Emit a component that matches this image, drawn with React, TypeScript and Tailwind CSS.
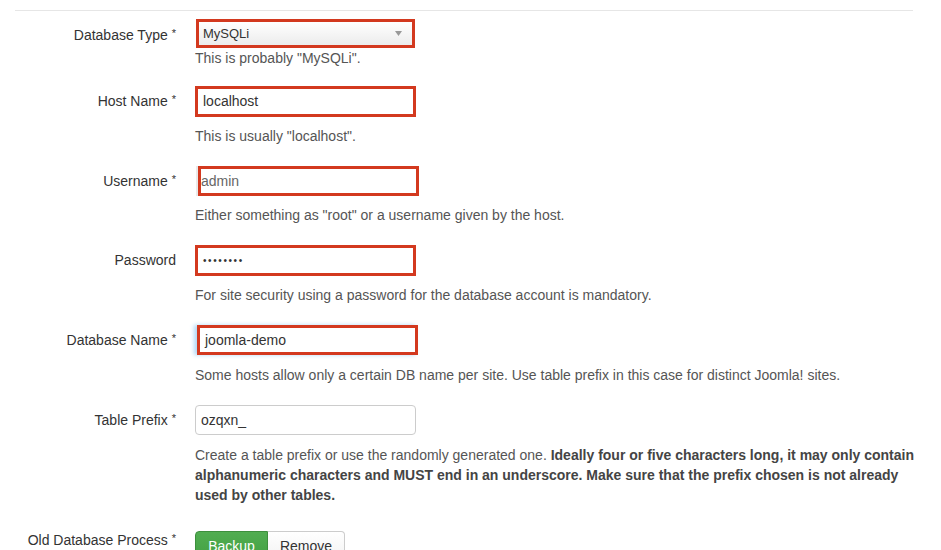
import { ReactNode } from "react";

/* ─── bits ───────────────────────────────────────── */
const RED = "border-[3px] border-[#d3391f] px-[2px]";

function Row({
  label,
  required = true,
  control,
  help,
  helpGap = "mt-[9px]",
  labelH = "h-[30px]",
  className = "",
}: {
  label: string;
  required?: boolean;
  control: ReactNode;
  help?: ReactNode;
  helpGap?: string;
  labelH?: string;
  className?: string;
}) {
  return (
    <div className={`flex ${className}`}>
      <div
        className={`w-[176px] shrink-0 ${labelH} flex items-center justify-end text-[14px] text-[#333]`}
      >
        {label}
        {required && <span className="ml-[4px] text-[11px] -mt-[4px]">*</span>}
      </div>
      <div className="ml-[19px] flex-1">
        {control}
        {help && (
          <div className={`${helpGap} text-[14px] leading-5 text-[#555]`}>{help}</div>
        )}
      </div>
    </div>
  );
}

function TextBox({
  value,
  className = "",
  textClass = "text-[#333]",
}: {
  value: ReactNode;
  className?: string;
  textClass?: string;
}) {
  return (
    <div
      className={`w-[221px] h-[30px] bg-white flex items-center px-[5px] text-[14px] ${textClass} ${className}`}
    >
      {value}
    </div>
  );
}

/* ─── page ───────────────────────────────────────── */
export default function App() {
  return (
    <div className="w-[941px] h-[550px] overflow-hidden bg-white font-['Liberation_Sans',Arial,sans-serif]">
      <div className="mx-[15px] mt-[10px] w-[898px] border-t border-[#e6e6e6]" />

      <div className="pt-[8px]">
        {/* database type */}
        <Row
          label="Database Type"
          labelH="h-[33px]"
          helpGap="mt-0"
          className="mb-[18px]"
          control={
            <div
              className={`w-[219px] h-[29px] ml-[1px] border-[3px] border-[#d3391f] bg-gradient-to-b from-white to-[#ececec] flex items-center justify-between pl-[4px] pr-[10px] text-[13px] text-[#333]`}
            >
              <span>MySQLi</span>
              <svg width="7" height="5" viewBox="0 0 7 5">
                <path d="M0 0h7L3.5 5z" fill="#999" />
              </svg>
            </div>
          }
          help={<>This is probably "MySQLi".</>}
        />

        {/* host */}
        <Row
          label="Host Name"
          className="mb-[20px]"
          control={<TextBox value="localhost" className={`h-[31px] ${RED}`} />}
          help={<>This is usually "localhost".</>}
        />

        {/* username */}
        <Row
          label="Username"
          className="mb-[20px]"
          control={
            <TextBox
              value="admin"
              className={`ml-[3px] w-[220px] border-[3px] border-[#d3391f] pl-0 shadow-[-2px_0_0_#e9e9e9]`}
              textClass="text-[#666]"
            />
          }
          help={<>Either something as "root" or a username given by the host.</>}
        />

        {/* password */}
        <Row
          label="Password"
          required={false}
          className="mb-[20px]"
          control={
            <TextBox
              value={
                <span className="text-[10px] tracking-[1.6px] text-[#333]">••••••••</span>
              }
              className={`h-[31px] ${RED}`}
            />
          }
          help={<>For site security using a password for the database account is mandatory.</>}
        />

        {/* database name */}
        <Row
          label="Database Name"
          helpGap="mt-[10px]"
          className="mb-[20px]"
          control={
            <TextBox
              value="joomla-demo"
              className={`ml-[2px] w-[219px] ${RED} shadow-[-3px_0_4px_rgba(82,168,236,0.45)]`}
            />
          }
          help={
            <>
              Some hosts allow only a certain DB name per site. Use table prefix in this case for
              distinct Joomla! sites.
            </>
          }
        />

        {/* table prefix */}
        <Row
          label="Table Prefix"
          helpGap="mt-[10px]"
          className="mb-[26px]"
          control={
            <TextBox
              value="ozqxn_"
              className="w-[220px] border border-[#ccc] rounded-[4px]"
            />
          }
          help={
            <>
              Create a table prefix or use the randomly generated one.{" "}
              <b className="text-[#444]">
                Ideally four or five characters long, it may only contain
                <br />
                alphanumeric characters and MUST end in an underscore. Make sure that the prefix
                chosen is not already
                <br />
                used by other tables.
              </b>
            </>
          }
        />

        {/* old db process */}
        <Row
          label="Old Database Process"
          labelH="h-[18px]"
          control={
            <div className="flex h-[30px] text-[14px]">
              <button className="w-[73px] rounded-l-[4px] bg-gradient-to-b from-[#51ad51] to-[#43a043] text-white border border-[#3d8f3d]">
                Backup
              </button>
              <button className="w-[77px] rounded-r-[4px] bg-gradient-to-b from-white to-[#f2f2f2] text-[#333] border border-l-0 border-[#ccc]">
                Remove
              </button>
            </div>
          }
        />
      </div>
    </div>
  );
}
